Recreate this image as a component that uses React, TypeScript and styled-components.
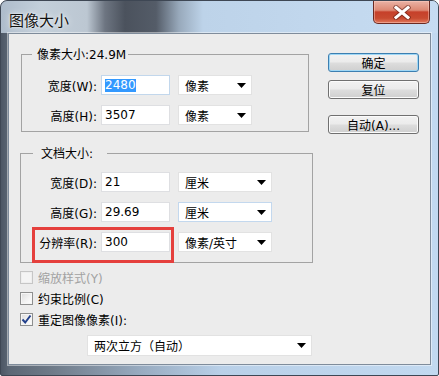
import React from 'react';
import styled, { createGlobalStyle } from 'styled-components';

const Global = createGlobalStyle`
  html, body { margin: 0; padding: 0; background: #ffffff; }
  body {
    font-family: "DejaVu Sans", "Noto Sans CJK SC", sans-serif;
    font-size: 12px;
    color: #000;
  }
  #root { width: 439px; height: 376px; overflow: hidden; }
`;

const Window = styled.div`
  box-sizing: border-box;
  width: 439px;
  height: 376px;
  display: flex;
  flex-direction: column;
  border: 1px solid #3e4754;
  border-radius: 7px 7px 2px 2px;
  overflow: hidden;
  background: linear-gradient(90deg, #4d5765 0px, #5c6775 8px, #6e7a88 50px, #98abc0 140px, #b9d0e8 220px, #c2d9f0 100%);
`;

const TitleBar = styled.div`
  height: 32px;
  display: flex;
  align-items: flex-start;
  padding-left: 8px;
  background: linear-gradient(90deg, #aebccb 0px, #c3cfda 40px, #bcc7d2 86px, #6d7581 104px, #4b525d 124px, #545c68 155px, #98a9bb 178px, #bdd3e9 202px, #c6dcf2 100%);
`;

const Title = styled.div`
  margin-top: 10px;
  font-family: "Noto Sans CJK SC", sans-serif;
  font-size: 15px;
  line-height: 18px;
  color: #111;
  text-shadow: 0 0 6px rgba(255, 255, 255, 0.9), 0 0 2px rgba(255, 255, 255, 0.9);
`;

const CloseButton = styled.div`
  box-sizing: border-box;
  margin-left: auto;
  margin-right: 8px;
  width: 57px;
  height: 23px;
  display: flex;
  align-items: center;
  justify-content: center;
  border: 1px solid #6b2a22;
  border-top: none;
  border-radius: 0 0 5px 5px;
  background: linear-gradient(180deg, #eab3a6 0%, #dd8873 42%, #c6402a 50%, #c84a30 78%, #e2785c 100%);
  box-shadow: inset 0 0 0 1px rgba(255, 210, 200, 0.45);
`;

const Body = styled.div`
  flex: 1;
  display: flex;
  padding: 0 7px 10px 7px;
`;

const Client = styled.div`
  box-sizing: border-box;
  width: 423px;
  height: 332px;
  display: flex;
  background: #ececec;
  border: 1px solid #7f8c9b;
  box-shadow: 0 0 0 1px rgba(255, 255, 255, 0.45);
`;

const LeftColumn = styled.div`
  display: flex;
  flex-direction: column;
  width: 292px;
  padding: 20px 0 0 11px;
`;

const RightColumn = styled.div`
  display: flex;
  flex-direction: column;
  align-items: flex-start;
  margin-left: 16px;
  padding-top: 19px;
`;

const Group = styled.div<{ $w: number; $h: number; $ml: number; $mt: number }>`
  box-sizing: border-box;
  width: ${p => p.$w}px;
  height: ${p => p.$h}px;
  margin-left: ${p => p.$ml}px;
  margin-top: ${p => p.$mt}px;
  display: flex;
  flex-direction: column;
  border: 1px solid #a3a3a3;
`;

const Caption = styled.div<{ $ml: number; $pl: number; $pr: number }>`
  align-self: flex-start;
  height: 16px;
  line-height: 16px;
  margin: -8px 0 0 ${p => p.$ml}px;
  padding: 0 ${p => p.$pr}px 0 ${p => p.$pl}px;
  background: #ececec;
  white-space: nowrap;
`;

const Rows = styled.div<{ $mt: number }>`
  display: flex;
  flex-direction: column;
  gap: 10px;
  margin-top: ${p => p.$mt}px;
`;

const Row = styled.div`
  position: relative;
  display: flex;
  align-items: center;
  height: 20px;
`;

const FieldLabel = styled.span<{ $w: number }>`
  width: ${p => p.$w}px;
  margin-right: 4px;
  text-align: right;
  white-space: nowrap;
`;

const TextBox = styled.div<{ $focus?: boolean }>`
  box-sizing: border-box;
  width: 69px;
  height: 20px;
  margin-right: 8px;
  padding: 0 3px;
  display: flex;
  align-items: center;
  background: #fff;
  border: 1px solid ${p => (p.$focus ? '#c2d7ec' : '#dedfe2')};
`;

const Selected = styled.span`
  background: #3399ff;
  color: #fff;
  line-height: 13px;
`;

const SelectBox = styled.div<{ $w: number; $h?: number; $hover?: boolean }>`
  box-sizing: border-box;
  width: ${p => p.$w}px;
  height: ${p => p.$h ?? 20}px;
  padding: 0 5px 0 6px;
  display: flex;
  align-items: center;
  justify-content: space-between;
  background: #fff;
  border: 1px solid ${p => (p.$hover ? '#c3d8ee' : '#e2e2e2')};
  white-space: nowrap;
`;

const Marker = styled.div`
  position: absolute;
  left: 11px;
  top: -5px;
  width: 142px;
  height: 36px;
  box-sizing: border-box;
  border: 3px solid #e5403d;
  pointer-events: none;
`;

const CheckList = styled.div`
  display: flex;
  flex-direction: column;
  margin-top: 4px;
`;

const CheckRow = styled.div<{ $disabled?: boolean }>`
  height: 21px;
  display: flex;
  align-items: center;
  gap: 5px;
  color: ${p => (p.$disabled ? '#a2a2a2' : '#000')};
`;

const CheckBox = styled.div<{ $disabled?: boolean }>`
  box-sizing: border-box;
  width: 13px;
  height: 13px;
  display: flex;
  align-items: center;
  justify-content: center;
  border: 1px solid ${p => (p.$disabled ? '#c6c6c6' : '#8e8f8f')};
  background: ${p =>
    p.$disabled ? '#f4f4f4' : 'linear-gradient(135deg, #dcdcdc 0%, #f4f4f4 60%, #ffffff 100%)'};
  box-shadow: inset 0 0 0 1px ${p => (p.$disabled ? '#eeeeee' : '#f6f6f6')};
`;

const BottomSelect = styled(SelectBox)`
  margin: 5px 0 0 67px;
`;

const Button = styled.div<{ $default?: boolean; $mt: number }>`
  box-sizing: border-box;
  width: 91px;
  height: 19px;
  margin-top: ${p => p.$mt}px;
  display: flex;
  align-items: center;
  justify-content: center;
  border: 1px solid ${p => (p.$default ? '#3c7fb1' : '#707070')};
  border-radius: 3px;
  background: linear-gradient(180deg, #f2f2f2 0%, #ebebeb 48%, #dddddd 52%, #cfcfcf 100%);
  box-shadow: inset 0 0 0 1px ${p => (p.$default ? '#9fd7f5' : '#fbfbfb')};
  white-space: nowrap;
`;

const Arrow = () => (
  <svg width="9" height="5" viewBox="0 0 9 5">
    <path d="M0 0H9L4.5 5Z" fill="#000" />
  </svg>
);

const CloseX = () => (
  <svg width="18" height="15" viewBox="0 0 18 15">
    <path
      d="M3 2.5L15 12.5M15 2.5L3 12.5"
      stroke="#5a1a12"
      strokeWidth="5"
      strokeLinecap="square"
      opacity="0.55"
    />
    <path d="M3 2.5L15 12.5M15 2.5L3 12.5" stroke="#ffffff" strokeWidth="3" strokeLinecap="square" />
  </svg>
);

const Check = () => (
  <svg width="11" height="11" viewBox="0 0 11 11">
    <path d="M1.5 5.5L4.2 8.5L9.5 1.5" stroke="#23418c" strokeWidth="2" fill="none" />
  </svg>
);

export default function App() {
  return (
    <>
      <Global />
      <Window>
        <TitleBar>
          <Title>图像大小</Title>
          <CloseButton>
            <CloseX />
          </CloseButton>
        </TitleBar>
        <Body>
          <Client>
            <LeftColumn>
              <Group $w={288} $h={78} $ml={1} $mt={0}>
                <Caption $ml={10} $pl={5} $pr={2}>像素大小:24.9M</Caption>
                <Rows $mt={12}>
                  <Row>
                    <FieldLabel $w={75}>宽度(W):</FieldLabel>
                    <TextBox $focus>
                      <Selected>2480</Selected>
                    </TextBox>
                    <SelectBox $w={74}>
                      像素
                      <Arrow />
                    </SelectBox>
                  </Row>
                  <Row>
                    <FieldLabel $w={75}>高度(H):</FieldLabel>
                    <TextBox>3507</TextBox>
                    <SelectBox $w={74}>
                      像素
                      <Arrow />
                    </SelectBox>
                  </Row>
                </Rows>
              </Group>
              <Group $w={293} $h={110} $ml={0} $mt={21}>
                <Caption $ml={12} $pl={8} $pr={14}>文档大小:</Caption>
                <Rows $mt={10}>
                  <Row>
                    <FieldLabel $w={76}>宽度(D):</FieldLabel>
                    <TextBox>21</TextBox>
                    <SelectBox $w={94}>
                      厘米
                      <Arrow />
                    </SelectBox>
                  </Row>
                  <Row>
                    <FieldLabel $w={76}>高度(G):</FieldLabel>
                    <TextBox>29.69</TextBox>
                    <SelectBox $w={94} $hover>
                      厘米
                      <Arrow />
                    </SelectBox>
                  </Row>
                  <Row>
                    <FieldLabel $w={76}>分辨率(R):</FieldLabel>
                    <TextBox>300</TextBox>
                    <SelectBox $w={94}>
                      像素/英寸
                      <Arrow />
                    </SelectBox>
                    <Marker />
                  </Row>
                </Rows>
              </Group>
              <CheckList>
                <CheckRow $disabled>
                  <CheckBox $disabled />
                  缩放样式(Y)
                </CheckRow>
                <CheckRow>
                  <CheckBox />
                  约束比例(C)
                </CheckRow>
                <CheckRow>
                  <CheckBox>
                    <Check />
                  </CheckBox>
                  重定图像像素(I):
                </CheckRow>
              </CheckList>
              <BottomSelect $w={225} $h={21}>
                两次立方（自动）
                <Arrow />
              </BottomSelect>
            </LeftColumn>
            <RightColumn>
              <Button $default $mt={0}>确定</Button>
              <Button $mt={8}>复位</Button>
              <Button $mt={16}>自动(A)...</Button>
            </RightColumn>
          </Client>
        </Body>
      </Window>
    </>
  );
}
